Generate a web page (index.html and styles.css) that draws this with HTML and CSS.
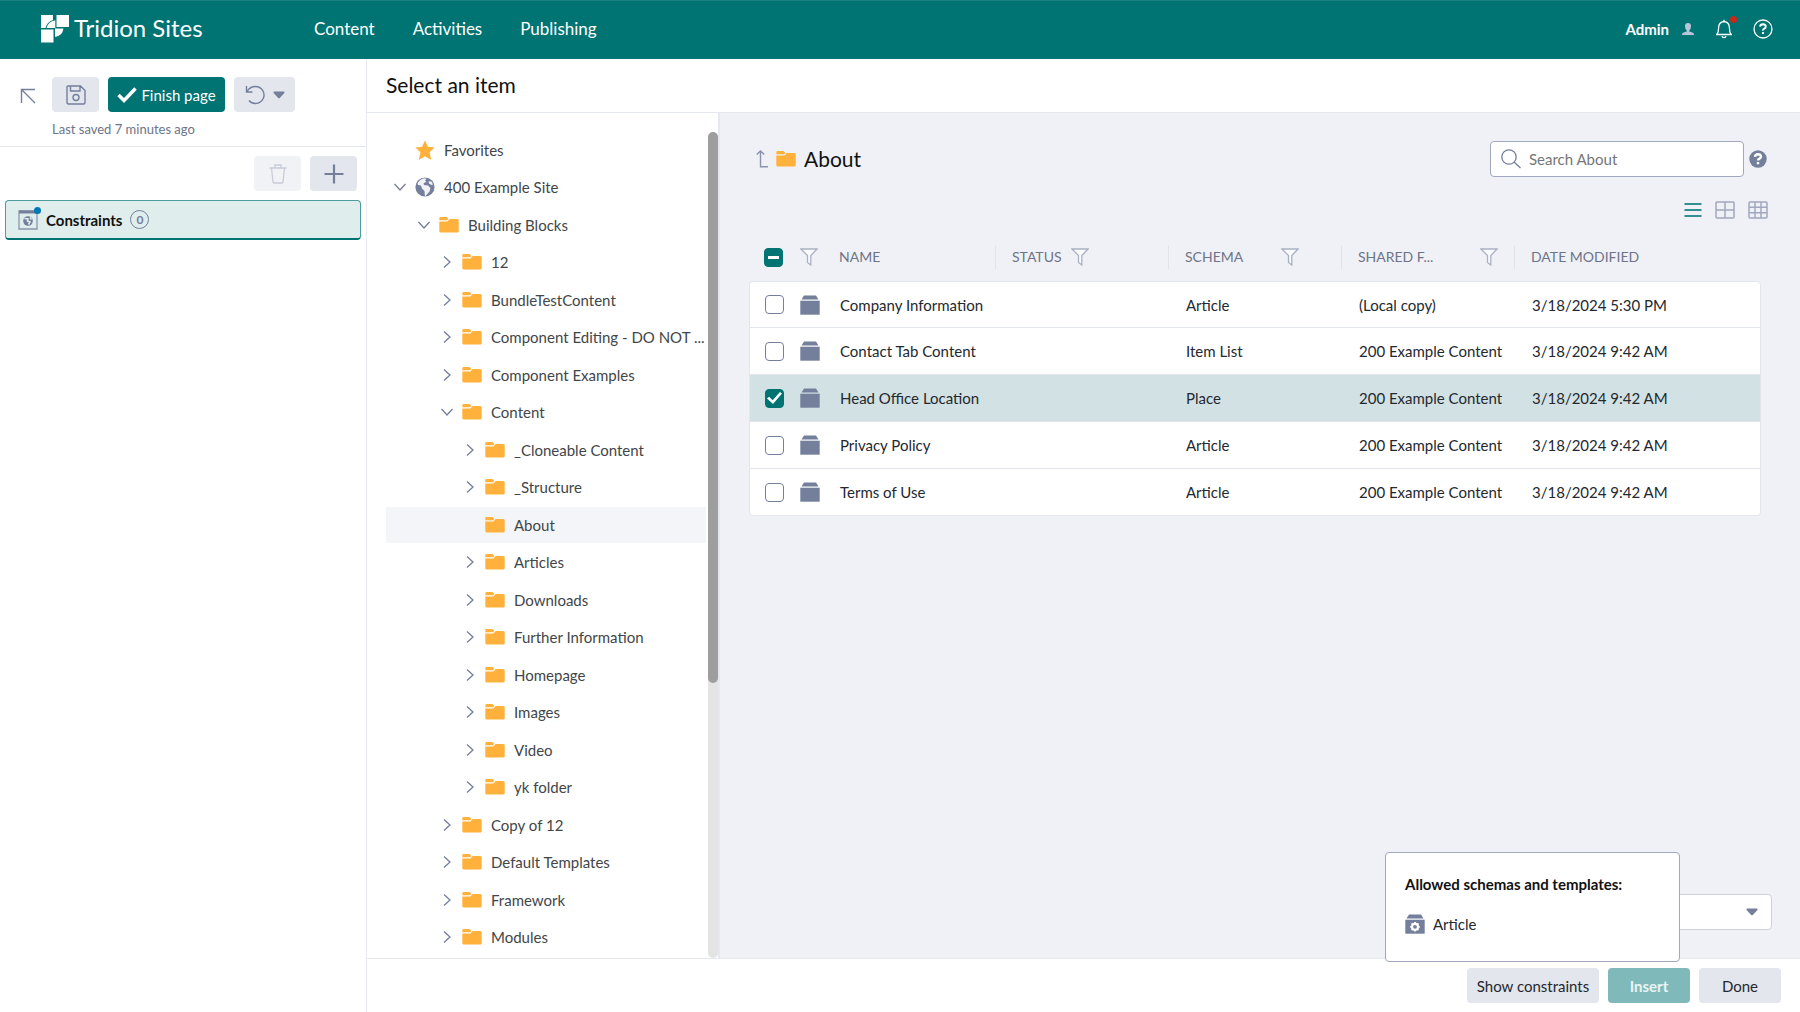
FILE: index.html
```html
<!DOCTYPE html>
<html lang="en">
<head>
    <meta charset="utf-8">
    <title>Tridion Sites</title>
    <link rel="stylesheet" href="styles.css">
</head>
<body>
    <!-- icon sprite -->
    <svg class="sprite" aria-hidden="true">
        <symbol id="folder" viewBox="0 0 20 16">
            <path d="M1.5 0h6l1.8 2-1.2 1.2H.3V1.2Q.3 0 1.5 0z"/>
            <path d="M.3 4.4h8.2L10.6 2h7.6q1.5 0 1.5 1.5v10.6q0 1.5-1.5 1.5H1.8Q.3 15.6.3 14.1z"/>
        </symbol>
        <symbol id="star" viewBox="0 0 20 20">
            <path d="M10 .6l2.9 6.2 6.7.8-5 4.6 1.4 6.7q.2.8-.6.6L10 16.3l-5.400 3.200q-.8.2-.6-.6l1.400-6.700-5-4.600 6.700-.8z"/>
        </symbol>
        <symbol id="globe" viewBox="0 0 20 20">
            <circle cx="10" cy="10" r="9.6"/>
            <path fill="#fff" d="M5 3.200q3.500-2.600 6.500-1.500l-1.500 2 1.500.8-3 2 .5 1.500 4 .5 2.500 2.500-1 3.500-4 4.500h-.6l-.4-5-2.500-2.500-1-3-3-.5-.5-2z" opacity=".9"/>
            <path fill="#fff" d="M13.500 4.200l3 .3 1.500 3-1.500.5-2.500-1.500z" opacity=".9"/>
        </symbol>
        <symbol id="right" viewBox="0 0 12 12">
            <path fill="none" stroke="currentColor" stroke-width="1.300" d="M3 .5L9 6l-6 5.500"/>
        </symbol>
        <symbol id="down" viewBox="0 0 12 12">
            <path fill="none" stroke="currentColor" stroke-width="1.300" d="M.5 3L6 9l5.500-6"/>
        </symbol>
        <symbol id="filter" viewBox="0 0 18 18">
            <path fill="#fafbfd" stroke="#aab1c4" stroke-width="1.300" d="M1 1h16l-6.200 6.500V17L7.500 14.500v-7z"/>
        </symbol>
        <symbol id="component" viewBox="0 0 20 20">
            <path d="M4 .5h12l2.500 4h-17z"/>
            <path d="M.3 5.700h19.400V19.700H.3z"/>
        </symbol>
        <symbol id="caret" viewBox="0 0 12 8">
            <path d="M1 .5h10q1 .6.4 1.500L6.800 7q-.8.6-1.600 0L.6 2Q0 1.100 1 .5z"/>
        </symbol>
    </svg>

    <header class="topbar">
        <a class="logo" href="#">
            <svg width="28" height="28" viewBox="0 0 28 28" fill="#fff">
                <path d="M0 0h12v5Q6 7 4.500 13H0z"/>
                <path d="M15.500 0H28v12H15.500z"/>
                <path d="M5.600 13Q7 6.500 14.300 5.300V13z"/>
                <path d="M0 14.500h12.500V27.500H0z"/>
                <path d="M14 13.500h8.500Q21.500 21 14 22z"/>
            </svg>
            <span>Tridion Sites</span>
        </a>
        <nav class="main-nav">
            <a href="#">Content</a>
            <a href="#">Activities</a>
            <a href="#">Publishing</a>
        </nav>
        <div class="user-area">
            <button type="button" class="user">Admin
                <svg width="12" height="12" viewBox="0 0 12 12" fill="#b9c6da"><path d="M6 0q3 0 3 3T7.300 7.300v1.200L11 9.700q1 .5 1 2.300H0q0-1.800 1-2.300l3.700-1.200V7.300Q3 6 3 3t3-3z"/></svg>
            </button>
            <button type="button" class="bell" aria-label="Notifications">
                <svg width="18" height="20" viewBox="0 0 18 20" fill="none" stroke="#fff" stroke-width="1.300"><path d="M1 15.500h16M2 15.500q1.500-2 1.500-6Q3.500 3 9 2.500q5.500.5 5.500 7 0 4 1.500 6M9 2.500V.8M7 17q.3 1.700 2 1.700T11 17"/></svg>
                <i class="dot"></i>
            </button>
            <button type="button" aria-label="Help">
                <svg width="20" height="20" viewBox="0 0 20 20" fill="none" stroke="#fff"><circle cx="10" cy="10" r="9" stroke-width="1.300"/><path stroke-width="1.900" d="M7 7.700Q7.200 5.200 10 5.200q2.800.1 2.800 2.300 0 1.300-1.500 2.100T10 11.600M10 13v2"/></svg>
            </button>
        </div>
    </header>

    <div class="workspace">
        <aside class="side">
            <div class="side-top">
                <button type="button" class="collapse" aria-label="Collapse">
                    <svg width="16" height="16" viewBox="0 0 16 16" fill="none" stroke="currentColor" stroke-width="1.400"><path d="M15 1.500H1.500V15M1.500 1.500L15 15"/></svg>
                </button>
                <div>
                    <div class="btn-row">
                        <button type="button" class="btn icon-btn" aria-label="Save">
                            <svg width="20" height="20" viewBox="0 0 20 20" fill="none" stroke="currentColor" stroke-width="1.400"><path d="M2 1h12.500L19 5.500V17.500q0 1.500-1.500 1.500h-15Q1 19 1 17.500V2q0-1 1-1zM4.500 1v5h9.500V1"/><circle cx="10" cy="12.500" r="3"/></svg>
                        </button>
                        <button type="button" class="btn btn-primary finish">
                            <svg width="20" height="16" viewBox="0 0 20 16" fill="none" stroke="#fff" stroke-width="3.400"><path d="M1.500 8L7 13.500 18.500 1.500"/></svg>
                            Finish page
                        </button>
                        <button type="button" class="btn undo" aria-label="Undo">
                            <svg width="20" height="20" viewBox="0 0 20 20" fill="none" stroke="currentColor" stroke-width="1.400"><path d="M1.500 1v6h6M2 6.500Q5 1.500 10.500 1.500a8.500 8.500 0 1 1-6.500 14"/></svg>
                            <svg class="fill" width="12" height="8"><use href="#caret"/></svg>
                        </button>
                    </div>
                    <p class="saved">Last saved 7 minutes ago</p>
                </div>
            </div>
            <div class="side-tools">
                <button type="button" class="btn icon-btn" aria-label="Delete" disabled>
                    <svg width="18" height="20" viewBox="0 0 18 20" fill="none" stroke="currentColor" stroke-width="1.300"><path d="M.5 4h17M6 4V1h6v3M2.500 4L4 18q.2 1 1.200 1h7.600q1 0 1.200-1L15.500 4"/></svg>
                </button>
                <button type="button" class="btn icon-btn" aria-label="Add">
                    <svg width="20" height="20" viewBox="0 0 20 20" stroke="currentColor" stroke-width="2.200"><path d="M10 .5v19M.5 10h19"/></svg>
                </button>
            </div>
            <button type="button" class="region">
                <span class="region-icon">
                    <svg width="20" height="20" viewBox="0 0 20 20" fill="none" stroke="currentColor"><path stroke-width="1.300" d="M1 1h18v18H1z" opacity=".8"/><path stroke-width="3" d="M1 2h18"/><circle cx="10" cy="11" r="4.800" fill="currentColor" stroke="none"/><path stroke="#dfeeed" stroke-width="1.600" d="M6.500 8.500l3.500.5-.5 2 2.500 1-1.500 2.500M12 7.500l1.500 2"/></svg>
                    <i class="dot blue"></i>
                </span>
                <span>Constraints</span>
                <span class="count">0</span>
            </button>
        </aside>

        <section class="dialog">
            <h1 class="dialog-title">Select an item</h1>
            <div class="dialog-body">
                <div class="tree-pane">
                    <ul class="tree">
                        <li><svg class="chev"></svg><svg class="ico gold"><use href="#star"/></svg>Favorites</li>
                        <li><svg class="chev"><use href="#down"/></svg><svg class="ico slate"><use href="#globe"/></svg>400 Example Site</li>
                        <li class="l1"><svg class="chev"><use href="#down"/></svg><svg class="ico gold"><use href="#folder"/></svg>Building Blocks</li>
                        <li class="l2"><svg class="chev"><use href="#right"/></svg><svg class="ico gold"><use href="#folder"/></svg>12</li>
                        <li class="l2"><svg class="chev"><use href="#right"/></svg><svg class="ico gold"><use href="#folder"/></svg>BundleTestContent</li>
                        <li class="l2"><svg class="chev"><use href="#right"/></svg><svg class="ico gold"><use href="#folder"/></svg>Component Editing - DO NOT ...</li>
                        <li class="l2"><svg class="chev"><use href="#right"/></svg><svg class="ico gold"><use href="#folder"/></svg>Component Examples</li>
                        <li class="l2"><svg class="chev"><use href="#down"/></svg><svg class="ico gold"><use href="#folder"/></svg>Content</li>
                        <li class="l3"><svg class="chev"><use href="#right"/></svg><svg class="ico gold"><use href="#folder"/></svg>_Cloneable Content</li>
                        <li class="l3"><svg class="chev"><use href="#right"/></svg><svg class="ico gold"><use href="#folder"/></svg>_Structure</li>
                        <li class="l3 selected"><svg class="chev"></svg><svg class="ico gold"><use href="#folder"/></svg>About</li>
                        <li class="l3"><svg class="chev"><use href="#right"/></svg><svg class="ico gold"><use href="#folder"/></svg>Articles</li>
                        <li class="l3"><svg class="chev"><use href="#right"/></svg><svg class="ico gold"><use href="#folder"/></svg>Downloads</li>
                        <li class="l3"><svg class="chev"><use href="#right"/></svg><svg class="ico gold"><use href="#folder"/></svg>Further Information</li>
                        <li class="l3"><svg class="chev"><use href="#right"/></svg><svg class="ico gold"><use href="#folder"/></svg>Homepage</li>
                        <li class="l3"><svg class="chev"><use href="#right"/></svg><svg class="ico gold"><use href="#folder"/></svg>Images</li>
                        <li class="l3"><svg class="chev"><use href="#right"/></svg><svg class="ico gold"><use href="#folder"/></svg>Video</li>
                        <li class="l3"><svg class="chev"><use href="#right"/></svg><svg class="ico gold"><use href="#folder"/></svg>yk folder</li>
                        <li class="l2"><svg class="chev"><use href="#right"/></svg><svg class="ico gold"><use href="#folder"/></svg>Copy of 12</li>
                        <li class="l2"><svg class="chev"><use href="#right"/></svg><svg class="ico gold"><use href="#folder"/></svg>Default Templates</li>
                        <li class="l2"><svg class="chev"><use href="#right"/></svg><svg class="ico gold"><use href="#folder"/></svg>Framework</li>
                        <li class="l2"><svg class="chev"><use href="#right"/></svg><svg class="ico gold"><use href="#folder"/></svg>Modules</li>
                    </ul>
                    <div class="scrollbar"><div class="thumb"></div></div>
                </div>

                <main class="list-pane">
                    <div class="list-head">
                        <button type="button" class="up" aria-label="Up one level">
                            <svg width="12" height="18" viewBox="0 0 12 18" fill="none" stroke="currentColor" stroke-width="1.400"><path d="M.7 4.500L4.500 1l3.800 3.500M4.500 1v15.800H12"/></svg>
                        </button>
                        <svg class="ico gold"><use href="#folder"/></svg>
                        <h2>About</h2>
                        <label class="search">
                            <svg width="20" height="20" viewBox="0 0 20 20" fill="none" stroke="currentColor" stroke-width="1.300"><circle cx="8" cy="8" r="7.200"/><path d="M13 13l6.500 6"/></svg>
                            <input type="text" placeholder="Search About" aria-label="Search About">
                        </label>
                        <button type="button" class="hint" aria-label="Search help">
                            <svg width="18" height="18" viewBox="0 0 18 18"><circle cx="9" cy="9" r="8.700" fill="currentColor"/><path fill="none" stroke="#fff" stroke-width="2.400" d="M6 6.800Q6.300 4.300 9 4.300q3 .1 3 2.500 0 1-1.500 1.800T9 10.500M9 12v2.300"/></svg>
                        </button>
                    </div>
                    <div class="views">
                        <button type="button" class="active" aria-label="List view">
                            <svg width="18" height="16" viewBox="0 0 18 16" stroke="currentColor" stroke-width="2"><path d="M.5 2h17M.5 8h17M.5 14h17"/></svg>
                        </button>
                        <button type="button" aria-label="Tile view">
                            <svg width="20" height="18" viewBox="0 0 20 18" fill="none" stroke="currentColor" stroke-width="1.500"><rect x="1" y="1" width="18" height="16" rx="1"/><path d="M10 1v16M1 9h18"/></svg>
                        </button>
                        <button type="button" aria-label="Grid view">
                            <svg width="20" height="18" viewBox="0 0 20 18" fill="none" stroke="currentColor" stroke-width="1.500"><rect x="1" y="1" width="18" height="16" rx="1"/><path d="M7 1v16M13 1v16M1 6.300h18M1 11.700h18"/></svg>
                        </button>
                    </div>

                    <table class="items">
                        <colgroup>
                            <col class="c-check"><col class="c-type"><col class="c-data"><col class="c-data"><col class="c-data"><col class="c-data"><col>
                        </colgroup>
                        <thead>
                            <tr>
                                <th><input type="checkbox" class="partial" aria-label="Select all"></th>
                                <th><svg class="funnel"><use href="#filter"/></svg></th>
                                <th>NAME</th>
                                <th class="sep"><div class="th">STATUS <svg class="funnel"><use href="#filter"/></svg></div></th>
                                <th class="sep"><div class="th spread">SCHEMA <svg class="funnel wide"><use href="#filter"/></svg></div></th>
                                <th class="sep"><div class="th spread">SHARED F... <svg class="funnel"><use href="#filter"/></svg></div></th>
                                <th class="sep">DATE MODIFIED</th>
                            </tr>
                        </thead>
                        <tbody>
                            <tr>
                                <td><input type="checkbox" aria-label="Company Information"></td>
                                <td><svg class="ico slate"><use href="#component"/></svg></td>
                                <td>Company Information</td><td></td><td>Article</td><td>(Local copy)</td><td>3/18/2024 5:30 PM</td>
                            </tr>
                            <tr>
                                <td><input type="checkbox" aria-label="Contact Tab Content"></td>
                                <td><svg class="ico slate"><use href="#component"/></svg></td>
                                <td>Contact Tab Content</td><td></td><td>Item List</td><td>200 Example Content</td><td>3/18/2024 9:42 AM</td>
                            </tr>
                            <tr class="checked">
                                <td><input type="checkbox" aria-label="Head Office Location" checked></td>
                                <td><svg class="ico slate"><use href="#component"/></svg></td>
                                <td>Head Office Location</td><td></td><td>Place</td><td>200 Example Content</td><td>3/18/2024 9:42 AM</td>
                            </tr>
                            <tr>
                                <td><input type="checkbox" aria-label="Privacy Policy"></td>
                                <td><svg class="ico slate"><use href="#component"/></svg></td>
                                <td>Privacy Policy</td><td></td><td>Article</td><td>200 Example Content</td><td>3/18/2024 9:42 AM</td>
                            </tr>
                            <tr>
                                <td><input type="checkbox" aria-label="Terms of Use"></td>
                                <td><svg class="ico slate"><use href="#component"/></svg></td>
                                <td>Terms of Use</td><td></td><td>Article</td><td>200 Example Content</td><td>3/18/2024 9:42 AM</td>
                            </tr>
                        </tbody>
                    </table>

                    <div class="picker">
                        <select aria-label="Template"><option></option></select>
                        <svg class="slate" width="12" height="8"><use href="#caret"/></svg>
                    </div>
                </main>
            </div>

            <footer class="dialog-footer">
                <div class="popup">
                    <strong>Allowed schemas and templates:</strong>
                    <div class="popup-item">
                        <svg class="slate" width="20" height="20" viewBox="0 0 20 20"><use href="#component"/><circle cx="10" cy="12.800" r="3" fill="none" stroke="#fff" stroke-width="2.200"/><path stroke="#fff" stroke-width="1.800" d="M10 8v2M10 15.600v2M5.200 12.800h2M12.800 12.800h2M6.600 9.400L8 10.800M12 14.800l1.400 1.400M13.400 9.400L12 10.800M8 14.800l-1.400 1.400"/></svg>
                        Article
                    </div>
                </div>
                <button type="button" class="btn show">Show constraints</button>
                <button type="button" class="btn btn-primary" disabled>Insert</button>
                <button type="button" class="btn">Done</button>
            </footer>
        </section>
    </div>
</body>
</html>
```

FILE: styles.css
```css
* {
    box-sizing: border-box;
}
body {
    margin: 0;
    min-height: 100vh;
    display: flex;
    flex-direction: column;
    font-family: Lato, "Open Sans", sans-serif;
    font-size: 15px;
    line-height: 20px;
    color: #24282f;
    background: #fff;
}
button, input, select {
    font: inherit;
    color: inherit;
}
button {
    border: none;
    background: none;
    padding: 0;
    cursor: pointer;
}
svg {
    display: block;
    flex: none;
}
a {
    color: inherit;
    text-decoration: none;
}
.sprite {
    position: absolute;
    width: 0;
    height: 0;
}
.ico {
    width: 20px;
    height: 20px;
}
.gold {
    fill: #ffb13b;
}
.slate, .fill {
    fill: #737f9b;
}
.dot {
    position: absolute;
    width: 7px;
    height: 7px;
    border-radius: 50%;
    background: #c5281c;
}

/* top bar */
.topbar {
    display: flex;
    align-items: center;
    height: 59px;
    padding: 0 27px 2px 41px;
    background: #007373;
    border-top: 1px solid #1a8080;
    color: #fff;
    font-size: 17px;
}
.logo {
    display: flex;
    align-items: flex-start;
    gap: 5px;
    width: 273px;
    font-size: 24px;
    line-height: 26px;
}
.main-nav {
    display: flex;
    gap: 38px;
}
.user-area {
    display: flex;
    align-items: center;
    gap: 20px;
    margin-left: auto;
}
.user {
    display: flex;
    align-items: center;
    gap: 13px;
    margin-right: 1px;
    font-size: 15px;
    font-weight: bold;
}
.bell {
    position: relative;
}
.bell .dot {
    top: -3px;
    right: -4px;
}

.workspace {
    flex: 1;
    display: flex;
}

/* left panel */
.side {
    width: 367px;
    border-right: 1px solid #e9ebf1;
    color: #737f9b;
}
.side-top {
    display: flex;
    align-items: flex-start;
    gap: 16px;
    padding: 18px 20px 0;
    border-bottom: 1px solid #e3e6ec;
}
.collapse {
    margin-top: 11px;
}
.btn-row, .side-tools {
    display: flex;
    gap: 9px;
}
.btn {
    display: flex;
    align-items: center;
    justify-content: center;
    height: 35px;
    min-width: 82px;
    border-radius: 4px;
    background: #e3e6ec;
}
.icon-btn {
    min-width: 47px;
}
.icon-btn:disabled {
    background: #f1f2f6;
    color: #c8ccd8;
}
.btn-primary {
    background: #007373;
    color: #fff;
}
.btn-primary:disabled {
    background: #80b9b9;
    color: #e8f5f5;
}
.finish {
    min-width: 117px;
    gap: 4px;
}
.undo {
    min-width: 61px;
    gap: 8px;
}
.saved {
    margin: 7px 0;
    color: #6d7488;
    font-size: 13px;
}
.side-tools {
    justify-content: flex-end;
    padding: 9px;
}
.region {
    display: flex;
    align-items: center;
    gap: 8px;
    width: calc(100% - 10px);
    height: 40px;
    margin: 0 5px;
    padding: 0 12px;
    border: 1px solid #4d9d9d;
    border-bottom: 2px solid #007373;
    border-radius: 4px;
    background: #dfeeed;
    color: #737f9b;
    font-weight: bold;
}
.region span:nth-child(2) {
    color: #111;
}
.region-icon {
    position: relative;
}
.region-icon .blue {
    top: -3px;
    right: -3px;
    background: #0078b4;
}
.count {
    width: 19px;
    height: 19px;
    border: 1px solid #737f9b;
    border-radius: 50%;
    font-size: 12px;
    line-height: 17px;
    text-align: center;
}

/* item selector */
.dialog {
    flex: 1;
    display: flex;
    flex-direction: column;
    min-width: 0;
}
.dialog-title {
    margin: 0;
    padding: 13px 19px 14px;
    border-bottom: 1px solid #e6e8ef;
    color: #111;
    font-size: 21px;
    font-weight: normal;
    line-height: 26px;
}
.dialog-body {
    flex: 1;
    display: flex;
}
.tree-pane {
    display: flex;
    width: 353px;
    padding: 19px 0 0 19px;
    border-right: 2px solid #e6e8ef;
    color: #424649;
}
.tree {
    flex: 1;
    display: flex;
    flex-direction: column;
    margin: 0;
    padding: 0 2px 1px 0;
    list-style: none;
    white-space: nowrap;
}
.tree li {
    flex: 1;
    display: flex;
    align-items: center;
    gap: 9px;
    padding-left: 8px;
    border: solid #fff;
    border-width: 0 0 2px;
}
.tree .l1 {
    padding-left: 32px;
}
.tree .l2 {
    padding-left: 55px;
}
.tree .l3 {
    padding-left: 78px;
}
.tree .selected {
    background: #f4f5f8;
}
.chev {
    width: 12px;
    height: 12px;
    color: #737f9b;
}
.scrollbar {
    width: 10px;
    border-radius: 5px;
    background: #e4e4e4;
}
.thumb {
    height: calc(100% * 2 / 3);
    border-radius: 5px;
    background: #9e9e9e;
}

.list-pane {
    flex: 1;
    display: flex;
    flex-direction: column;
    min-width: 0;
    padding: 28px;
    padding-left: 29px;
    background: #f0f1f6;
}
.list-head {
    display: flex;
    align-items: center;
    padding: 0 5px 0 7px;
}
.list-head h2 {
    flex: 1;
    margin: 0 0 0 8px;
    color: #111;
    font-size: 21px;
    font-weight: normal;
}
.up {
    margin-right: 8px;
    color: #8b94ad;
}
.search {
    display: flex;
    align-items: center;
    gap: 8px;
    width: 254px;
    height: 36px;
    padding: 0 10px;
    border: 1px solid #a0a8bd;
    border-radius: 4px;
    background: #fff;
    color: #737f9b;
}
.search input {
    flex: 1;
    min-width: 0;
    padding: 0;
    border: none;
    outline: none;
    background: none;
}
.search input::placeholder {
    color: #767676;
}
.hint {
    margin-left: 5px;
    color: #737f9b;
}
.views {
    display: flex;
    justify-content: flex-end;
    align-items: center;
    gap: 13px;
    height: 18px;
    margin: 24px 4px 14px 0;
    color: #a0a8bd;
}
.views .active {
    color: #33908f;
}

.items {
    width: calc(100% - 11px);
    table-layout: fixed;
    border-spacing: 0;
}
.c-check {
    width: 47px;
}
.c-type {
    width: 26px;
}
.c-data {
    width: 173px;
}
.items th {
    height: 48px;
    padding: 0 0 0 17px;
    color: #6d7488;
    font-size: 14px;
    font-weight: normal;
    text-align: left;
}
.items td {
    height: 47px;
    padding: 0 0 0 18px;
    border-bottom: 1px solid #e3e6ec;
    background: #fff;
    white-space: nowrap;
}
.items th:first-child, .items td:first-child {
    padding-left: 15px;
}
.items th:nth-child(2), .items td:nth-child(2) {
    padding-left: 4px;
}
.items td:first-child {
    border-left: 1px solid #e3e6ec;
}
.items td:last-child {
    border-right: 1px solid #e3e6ec;
}
.items tbody tr:first-child td {
    border-top: 1px solid #e3e6ec;
}
.items tr:first-child td:first-child {
    border-top-left-radius: 4px;
}
.items tr:first-child td:last-child {
    border-top-right-radius: 4px;
}
.items tr:last-child td:first-child {
    border-bottom-left-radius: 4px;
}
.items tr:last-child td:last-child {
    border-bottom-right-radius: 4px;
}
.items .checked td {
    background: #d2e2e4;
}
.items .sep {
    background: linear-gradient(#e0e3ea, #e0e3ea) no-repeat left center / 1px 23px;
}
.th {
    display: flex;
    align-items: center;
    gap: 9px;
}
.spread {
    justify-content: space-between;
    padding-right: 16px;
}
.funnel {
    width: 18px;
    height: 18px;
}
.wide {
    margin-right: 26px;
}
input[type="checkbox"] {
    display: grid;
    place-items: center;
    appearance: none;
    width: 19px;
    height: 19px;
    margin: 0;
    border: 1px solid #737f9b;
    border-radius: 4px;
    background: #fff;
}
input[type="checkbox"]:checked, input[type="checkbox"].partial {
    border-color: #007373;
    background: #007373;
}
input:checked::after {
    content: "";
    width: 15px;
    height: 12px;
    background: #fff;
    clip-path: polygon(0 55%, 14% 40%, 38% 68%, 86% 0, 100% 13%, 40% 100%);
}
input.partial::after {
    content: "";
    width: 11px;
    height: 3px;
    background: #fff;
}
.picker {
    position: relative;
    width: 290px;
    margin: auto 0 0 auto;
}
.picker select {
    display: block;
    width: 100%;
    height: 36px;
    appearance: none;
    border: 1px solid #cdd1dc;
    border-radius: 4px;
    background: #fff;
}
.picker svg {
    position: absolute;
    top: 14px;
    right: 14px;
    pointer-events: none;
}

.dialog-footer {
    position: relative;
    display: flex;
    justify-content: flex-end;
    gap: 9px;
    padding: 9px 19px;
    border-top: 1px solid #e6e8ef;
}
.dialog-footer .show {
    min-width: 132px;
}
.btn-primary:disabled {
    font-weight: bold;
}
.popup {
    position: absolute;
    right: 120px;
    bottom: 50px;
    width: 295px;
    padding: 21px 19px 27px;
    border: 1px solid #a0a8bd;
    border-radius: 4px;
    background: #fff;
}
.popup strong {
    color: #111;
}
.popup-item {
    display: flex;
    align-items: center;
    gap: 8px;
    margin-top: 20px;
}
```
